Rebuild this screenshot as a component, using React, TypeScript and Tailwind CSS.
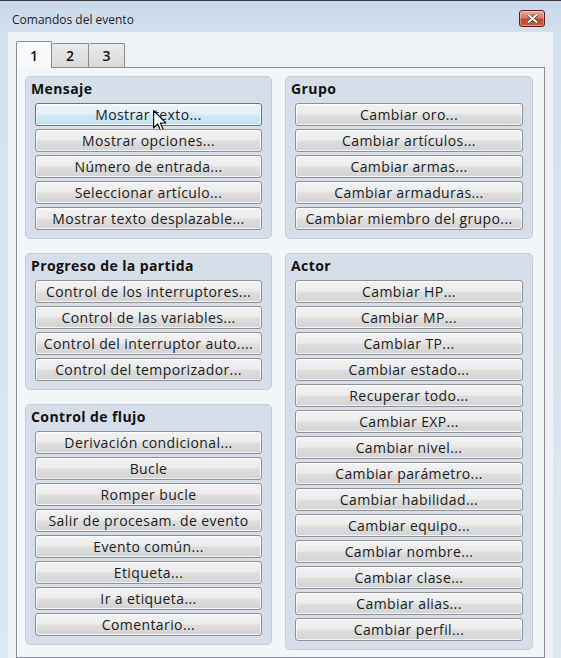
const mensaje = [
  'Mostrar texto...',
  'Mostrar opciones...',
  'Número de entrada...',
  'Seleccionar artículo...',
  'Mostrar texto desplazable...',
];

const progreso = [
  'Control de los interruptores...',
  'Control de las variables...',
  'Control del interruptor auto....',
  'Control del temporizador...',
];

const flujo = [
  'Derivación condicional...',
  'Bucle',
  'Romper bucle',
  'Salir de procesam. de evento',
  'Evento común...',
  'Etiqueta...',
  'Ir a etiqueta...',
  'Comentario...',
];

const grupo = [
  'Cambiar oro...',
  'Cambiar artículos...',
  'Cambiar armas...',
  'Cambiar armaduras...',
  'Cambiar miembro del grupo...',
];

const actor = [
  'Cambiar HP...',
  'Cambiar MP...',
  'Cambiar TP...',
  'Cambiar estado...',
  'Recuperar todo...',
  'Cambiar EXP...',
  'Cambiar nivel...',
  'Cambiar parámetro...',
  'Cambiar habilidad...',
  'Cambiar equipo...',
  'Cambiar nombre...',
  'Cambiar clase...',
  'Cambiar alias...',
  'Cambiar perfil...',
];

function CmdButton({ label, hover = false }: { label: string; hover?: boolean }) {
  return (
    <div
      className={`relative h-[23px] flex items-center justify-center rounded-[3px] border text-[14px] tracking-[0.4px] leading-none text-[#1b1b1b] whitespace-nowrap shadow-[inset_0_0_0_1px_rgba(255,255,255,0.75)] ${
        hover
          ? 'border-[#3c7fb1] bg-[linear-gradient(#edf6fc,#e0f0fa_50%,#d0e8f7_50%,#c2e0f3)]'
          : 'border-[#8e9093] bg-[linear-gradient(#f3f3f3,#ebebeb_48%,#dedede_52%,#d3d3d3)]'
      }`}
    >
      {label}
      {hover && (
        <svg
          className="absolute left-[117px] top-[6px]"
          width="14"
          height="22"
          viewBox="0 0 12 19"
        >
          <path
            d="M0.5 0.5 L0.5 15.5 L4 12 L6.5 18 L8.8 17 L6.3 11.2 L11 11.2 Z"
            fill="#ffffff"
            stroke="#000000"
            strokeWidth="1"
            strokeLinejoin="round"
          />
        </svg>
      )}
    </div>
  );
}

function GroupBox({ title, items, hoverFirst = false }: { title: string; items: string[]; hoverFirst?: boolean }) {
  return (
    <div className="rounded-[5px] border border-[#c3cdd8] bg-[#d6dfe9] px-[9px] pb-[8px]">
      <div className="h-[26px] flex items-center pb-[3px] -ml-[4px] text-[14px] tracking-[0.4px] font-bold text-[#111111]">
        {title}
      </div>
      <div className="flex flex-col gap-[3px]">
        {items.map((it, i) => (
          <CmdButton key={it} label={it} hover={hoverFirst && i === 0} />
        ))}
      </div>
    </div>
  );
}

export default function App() {
  return (
    <div
      className="w-[561px] h-[658px] overflow-hidden flex flex-col border-t border-[#3b3f45] bg-[linear-gradient(#c9d8ea,#d5e1ee_40px,#dde7f1)]"
      style={{ fontFamily: '"Open Sans", "Noto Sans", "Liberation Sans", sans-serif' }}
    >
      {/* Title bar */}
      <div className="h-[31px] shrink-0 flex items-start justify-between pl-[12px] pr-[16px]">
        <span className="mt-[10px] text-[12px] leading-[17px] text-[#1e1e1e]">Comandos del evento</span>
        <div className="mt-[9px] w-[26px] h-[17px] rounded-[3px] border border-[#5a2118] bg-[linear-gradient(#e9a99b,#d77a66_45%,#c2442c_55%,#c95a3d)] flex items-center justify-center shadow-[inset_0_0_0_1px_rgba(255,255,255,0.35)]">
          <svg width="11" height="9" viewBox="0 0 11 9">
            <path d="M1 0.5 L5.5 4.5 L10 0.5 M1 8.5 L5.5 4.5 L10 8.5" stroke="#3a2a28" strokeWidth="3.2" fill="none" />
            <path d="M1 0.5 L5.5 4.5 L10 0.5 M1 8.5 L5.5 4.5 L10 8.5" stroke="#ffffff" strokeWidth="2" fill="none" />
          </svg>
        </div>
      </div>

      {/* Client area */}
      <div className="flex-1 mx-[8px] bg-[#eef2f6] pt-[9px] px-[8px] flex flex-col">
        {/* Tabs */}
        <div className="flex items-end h-[26px] shrink-0">
          <div className="relative z-10 -mb-px w-[36px] h-[27px] border border-b-0 border-[#898c95] rounded-t-[2px] bg-[#f7f9fb] flex items-center justify-center text-[14px] font-semibold text-[#111111]">
            1
          </div>
          <div className="w-[37px] h-[24px] border border-l-0 border-b-0 border-[#898c95] rounded-t-[2px] bg-[linear-gradient(#eaeaea,#d9d9d9)] flex items-center justify-center text-[14px] font-semibold text-[#111111]">
            2
          </div>
          <div className="w-[36px] h-[24px] border border-l-0 border-b-0 border-[#898c95] rounded-t-[2px] bg-[linear-gradient(#eaeaea,#d9d9d9)] flex items-center justify-center text-[14px] font-semibold text-[#111111]">
            3
          </div>
        </div>

        {/* Tab panel */}
        <div className="flex-1 border border-[#898c95] bg-[#f3f6f9] pt-[8px] pl-[8px] flex gap-[13px]">
          <div className="w-[247px] flex flex-col gap-[14px]">
            <GroupBox title="Mensaje" items={mensaje} hoverFirst />
            <GroupBox title="Progreso de la partida" items={progreso} />
            <GroupBox title="Control de flujo" items={flujo} />
          </div>
          <div className="w-[248px] flex flex-col gap-[14px]">
            <GroupBox title="Grupo" items={grupo} />
            <GroupBox title="Actor" items={actor} />
          </div>
        </div>
      </div>
    </div>
  );
}
